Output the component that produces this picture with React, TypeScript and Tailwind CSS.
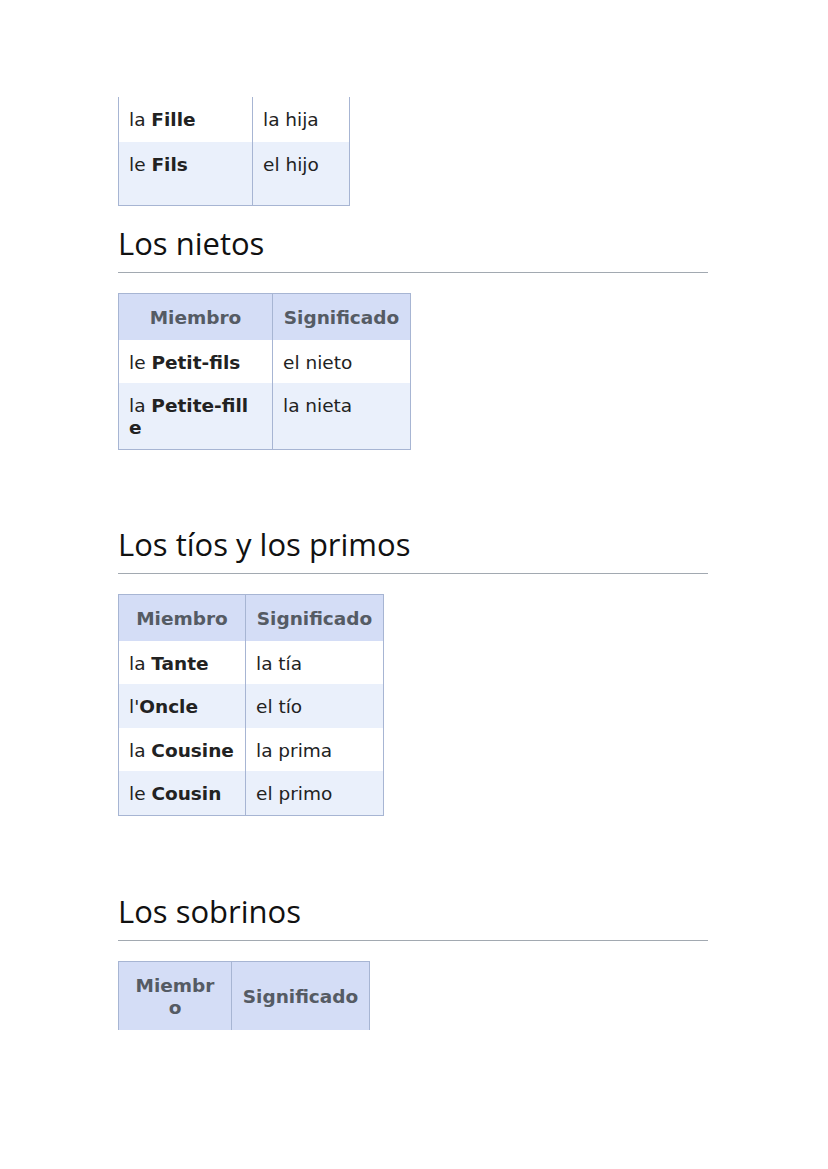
import React from "react";

const cellBase = "border-x border-[#a7b5d3] align-top px-[10px] pt-[12px] pb-[9.5px] leading-[22px]";
const headBase = "border-x border-[#a7b5d3] bg-[#d4ddf6] text-[#555b64] font-bold text-center align-middle px-[10px] pt-[13px] pb-[11px] leading-[22px]";

function Heading({ children, mt }: { children: React.ReactNode; mt: string }) {
  return (
    <h2
      className={`${mt} w-[590px] border-b border-[#a2a9b1] pb-[11px] text-[31px] leading-[36px] font-medium text-[#111]`}
      style={{ fontFamily: '"Open Sans", "DejaVu Sans", sans-serif' }}
    >
      {children}
    </h2>
  );
}

type Row = { art: string; word: React.ReactNode; mean: string };

function VocabTable({
  rows,
  w1,
  w2,
  head1,
  mt,
}: {
  rows: Row[];
  w1: string;
  w2: string;
  head1: React.ReactNode;
  mt: string;
}) {
  return (
    <table className={`${mt} border border-[#a7b5d3] border-collapse table-fixed text-[18.5px] text-[#222]`}>
      <colgroup>
        <col className={w1} />
        <col className={w2} />
      </colgroup>
      <thead>
        <tr>
          <th className={headBase}>{head1}</th>
          <th className={headBase}>Significado</th>
        </tr>
      </thead>
      <tbody>
        {rows.map((r, i) => (
          <tr key={i} className={i % 2 === 0 ? "bg-white" : "bg-[#eaf0fb]"}>
            <td className={cellBase}>
              {r.art}
              <b>{r.word}</b>
            </td>
            <td className={cellBase}>{r.mean}</td>
          </tr>
        ))}
      </tbody>
    </table>
  );
}

export default function App() {
  return (
    <div
      className="w-[828px] min-h-[1169px] bg-white pl-[118px] pt-[97px] flex flex-col items-start"
      style={{ fontFamily: '"DejaVu Sans", Verdana, sans-serif' }}
    >
      {/* Tail of previous table */}
      <table className="border-collapse table-fixed text-[18.5px] text-[#222]">
        <colgroup>
          <col className="w-[134px]" />
          <col className="w-[97px]" />
        </colgroup>
        <tbody>
          <tr className="bg-white">
            <td className="border-x border-[#a7b5d3] align-top px-[10px] pt-[12px] leading-[22px] h-[45px]">
              la <b>Fille</b>
            </td>
            <td className="border-x border-[#a7b5d3] align-top px-[10px] pt-[12px] leading-[22px] h-[45px]">
              la hija
            </td>
          </tr>
          <tr className="bg-[#eaf0fb]">
            <td className="border-x border-b border-[#a7b5d3] align-top px-[10px] pt-[12px] leading-[22px] h-[63px]">
              le <b>Fils</b>
            </td>
            <td className="border-x border-b border-[#a7b5d3] align-top px-[10px] pt-[12px] leading-[22px] h-[63px]">
              el hijo
            </td>
          </tr>
        </tbody>
      </table>

      <Heading mt="mt-[19px]">Los nietos</Heading>
      <VocabTable
        mt="mt-[20px]"
        w1="w-[154px]"
        w2="w-[138px]"
        head1="Miembro"
        rows={[
          { art: "le ", word: "Petit-fils", mean: "el nieto" },
          {
            art: "la ",
            word: (
              <>
                Petite-fill
                <br />e
              </>
            ),
            mean: "la nieta",
          },
        ]}
      />

      <Heading mt="mt-[76px]">Los tíos y los primos</Heading>
      <VocabTable
        mt="mt-[20px]"
        w1="w-[127px]"
        w2="w-[138px]"
        head1="Miembro"
        rows={[
          { art: "la ", word: "Tante", mean: "la tía" },
          { art: "l'", word: "Oncle", mean: "el tío" },
          { art: "la ", word: "Cousine", mean: "la prima" },
          { art: "le ", word: "Cousin", mean: "el primo" },
        ]}
      />

      <Heading mt="mt-[77px]">Los sobrinos</Heading>
      <table className="mt-[20px] border-x border-t border-[#a7b5d3] border-collapse table-fixed text-[18.5px]">
        <colgroup>
          <col className="w-[113px]" />
          <col className="w-[138px]" />
        </colgroup>
        <thead>
          <tr>
            <th className={headBase}>
              Miembr
              <br />o
            </th>
            <th className={headBase}>Significado</th>
          </tr>
        </thead>
      </table>
    </div>
  );
}
